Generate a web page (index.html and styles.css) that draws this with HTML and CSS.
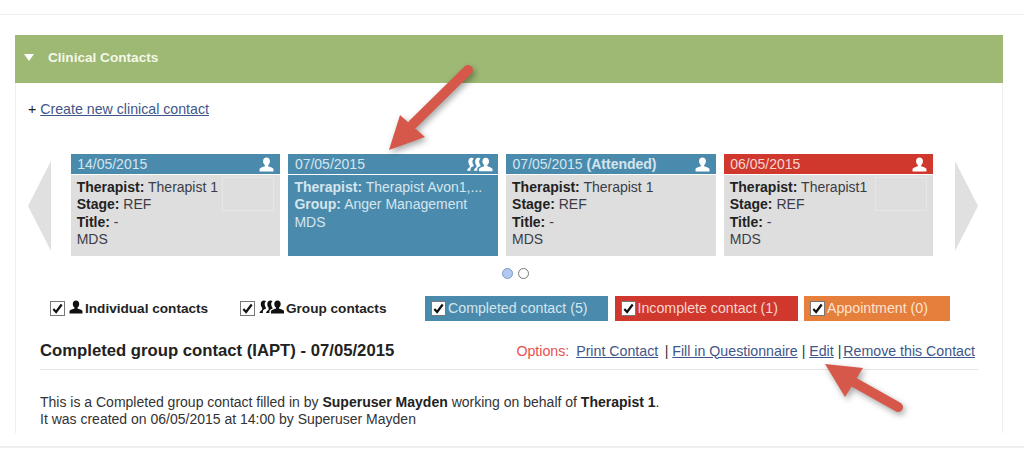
FILE: index.html
```html
<!DOCTYPE html>
<html lang="en">
<head>
    <meta charset="UTF-8">
    <meta name="viewport" content="width=device-width, initial-scale=1.0">
    <title>Clinical Contacts</title>
    <link rel="stylesheet" href="styles.css">
</head>
<body>
    <svg class="icon-defs" width="0" height="0">
        <symbol id="person" viewBox="0 0 14 14">
            <path d="M7 0.5c2 0 3.2 1.5 3.2 3.4 0 1.6-.8 3-1.700 3.700v1c1.800.5 4 1.200 5 2.400v2.500H.5v-2.500c1-1.200 3.200-1.900 5-2.400v-1C4.600 6.900 3.800 5.500 3.800 3.900 3.800 2 5 .5 7 .5z"/>
        </symbol>
        <symbol id="group" viewBox="0 0 25 14">
            <path d="M18 .5c2 0 3.200 1.500 3.200 3.400 0 1.600-.8 3-1.700 3.700v1c1.800.5 4 1.200 5 2.400v2.500h-13v-2.500c1-1.200 3.200-1.900 5-2.400v-1c-.9-.7-1.700-2.100-1.700-3.700C14.800 2 16 .5 18 .5z"/>
            <path d="M11 .5c.8 0 1.500.2 2 .7-.9.8-1.300 1.800-1.300 2.900 0 1.400.5 2.600 1.200 3.500v1.200c-1.300.4-2.400 1-3 2v2.200H6.500c.3-1.400 1.200-2.500 2.600-3.300V7.800c-.8-.8-1.300-2.200-1.300-3.800C7.800 2 9 .5 11 .5z"/>
            <path d="M4.500.5c.8 0 1.500.2 2 .7-.9.8-1.300 1.800-1.300 2.900 0 1.400.5 2.600 1.200 3.500v1.200c-1.300.4-2.400 1-3 2v2.200H0c.3-1.400 1.200-2.500 2.600-3.300V7.800c-.8-.8-1.300-2.200-1.300-3.800C1.300 2 2.500.5 4.500.5z"/>
        </symbol>
        <symbol id="tick" viewBox="0 0 14 14">
            <path d="M2.500 7.500l3 3.200 6-8" fill="none" stroke="#111" stroke-width="2.400"/>
        </symbol>
    </svg>

    <div class="page">
        <section class="panel">
            <div class="panel-head">
                <span class="caret-down"></span>
                <span>Clinical Contacts</span>
            </div>

            <div class="panel-body">
                <p class="create-row">+ <a href="#">Create new clinical contact</a></p>

                <div class="carousel">
                    <span class="nav nav-prev"></span>

                    <div class="card">
                        <div class="card-date blue">
                            <span>14/05/2015</span>
                            <svg class="card-icon"><use href="#person"/></svg>
                        </div>
                        <div class="card-text">
                            <span class="ghost"></span>
                            <b>Therapist:</b> Therapist 1<br>
                            <b>Stage:</b> REF<br>
                            <b>Title:</b> -<br>
                            MDS
                        </div>
                    </div>

                    <div class="card selected">
                        <div class="card-date blue">
                            <span>07/05/2015</span>
                            <svg class="card-icon wide"><use href="#group"/></svg>
                        </div>
                        <div class="card-text">
                            <b>Therapist:</b> Therapist Avon1,...<br>
                            <b>Group:</b> Anger Management<br>
                            MDS
                        </div>
                    </div>

                    <div class="card">
                        <div class="card-date blue">
                            <span>07/05/2015 <b>(Attended)</b></span>
                            <svg class="card-icon"><use href="#person"/></svg>
                        </div>
                        <div class="card-text">
                            <b>Therapist:</b> Therapist 1<br>
                            <b>Stage:</b> REF<br>
                            <b>Title:</b> -<br>
                            MDS
                        </div>
                    </div>

                    <div class="card">
                        <div class="card-date red">
                            <span>06/05/2015</span>
                            <svg class="card-icon"><use href="#person"/></svg>
                        </div>
                        <div class="card-text">
                            <span class="ghost"></span>
                            <b>Therapist:</b> Therapist1<br>
                            <b>Stage:</b> REF<br>
                            <b>Title:</b> -<br>
                            MDS
                        </div>
                    </div>

                    <span class="nav nav-next"></span>
                </div>

                <div class="dots">
                    <span class="dot active"></span>
                    <span class="dot"></span>
                </div>

                <div class="filters">
                    <label class="type-filter first">
                        <span class="check"><svg><use href="#tick"/></svg></span>
                        <svg class="type-icon"><use href="#person"/></svg>
                        Individual contacts
                    </label>
                    <label class="type-filter second">
                        <span class="check"><svg><use href="#tick"/></svg></span>
                        <svg class="type-icon wide"><use href="#group"/></svg>
                        Group contacts
                    </label>
                    <label class="state-filter blue completed">
                        <span class="check"><svg><use href="#tick"/></svg></span>
                        Completed contact (5)
                    </label>
                    <label class="state-filter red incomplete">
                        <span class="check"><svg><use href="#tick"/></svg></span>
                        Incomplete contact (1)
                    </label>
                    <label class="state-filter orange appointment">
                        <span class="check"><svg><use href="#tick"/></svg></span>
                        Appointment (0)
                    </label>
                </div>

                <div class="detail-head">
                    <h2>Completed group contact (IAPT) - 07/05/2015</h2>
                    <div class="options">
                        <span class="options-label">Options:</span>
                        <a href="#">Print Contact</a>
                        <span class="first-sep">|</span>
                        <a href="#">Fill in Questionnaire</a>
                        <span>|</span>
                        <a href="#">Edit</a>
                        <span class="last-sep">|</span>
                        <a href="#">Remove this Contact</a>
                    </div>
                </div>

                <p class="detail-text">
                    This is a Completed group contact filled in by <b>Superuser Mayden</b> working on behalf of <b>Therapist 1</b>.<br>
                    It was created on 06/05/2015 at 14:00 by Superuser Mayden
                </p>
            </div>
        </section>
    </div>

    <!-- annotation arrows on top of the screenshot -->
    <svg class="arrow arrow-top" width="100" height="100" viewBox="0 0 100 100">
        <path d="M83 10L28 64" stroke="#d6584b" stroke-width="10" stroke-linecap="round" fill="none"/>
        <path d="M4 90L15 55 40 77z" fill="#d6584b"/>
    </svg>
    <svg class="arrow arrow-bottom" width="100" height="60" viewBox="0 0 100 60">
        <path d="M78 45L30 18" stroke="#d6584b" stroke-width="10" stroke-linecap="round" fill="none"/>
        <path d="M5 2L43 6 25 35z" fill="#d6584b"/>
    </svg>
</body>
</html>
```
FILE: styles.css
```css
body {
    margin: 0;
    background-color: #fff;
    font-family: "Liberation Sans", Arial, sans-serif;
    font-size: 14.2px;
    color: #333;
}

a {
    color: #3f5688;
}

.icon-defs {
    display: block;
    height: 0;
}

.page {
    height: 411px;
    margin-top: 14px;
    padding: 20px 21px 0 15px;
    border-top: 1px solid #eee;
    border-bottom: 2px solid #eee;
    overflow: hidden;
}

/* Panel */
.panel {
    border-left: 1px solid #eee;
    border-right: 1px solid #eee;
    height: 398px;
}

.panel-head {
    display: flex;
    align-items: center;
    height: 45px;
    margin: 0 -1px;
    padding: 0 0 3px 9px;
    background-color: #9db974;
    color: #f4f8e8;
    font-size: 13.6px;
    font-weight: bold;
}

.caret-down {
    width: 0;
    height: 0;
    margin-right: 14px;
    margin-bottom: 1px;
    border-left: 5px solid transparent;
    border-right: 5px solid transparent;
    border-top: 7px solid #fff;
}

.panel-body {
    padding: 0 24px;
}

.create-row {
    margin: 0 0 0 -12px;
    padding-top: 18px;
    height: 35px;
    color: #222;
}

/* Carousel */
.carousel {
    display: flex;
    gap: 8px;
    position: relative;
    width: 950px;
    margin-top: 18px;
    margin-left: -12px;
    padding-left: 42.700px;
    box-sizing: border-box;
}

.nav {
    position: absolute;
    top: 7px;
    width: 0;
    height: 0;
    border-top: 45px solid transparent;
    border-bottom: 45px solid transparent;
}

.nav-prev {
    left: 0;
    border-right: 23px solid #e0e0e0;
}

.nav-next {
    right: 0;
    border-left: 23px solid #e0e0e0;
}

.card {
    flex: none;
    width: 209.700px;
    height: 102px;
    background-color: #dedede;
    font-size: 14px;
}

.card-date {
    display: flex;
    justify-content: space-between;
    align-items: center;
    height: 20px;
    padding: 0 6px 0 6.500px;
    border-bottom: 1px solid #fff;
    color: #d5e5ee;
}

.card-date.red {
    color: #f6d5d0;
}

.card-icon {
    width: 15px;
    height: 15px;
    fill: #fff;
}

.card-icon.wide {
    width: 26px;
    margin-right: -1px;
}

.card-text {
    position: relative;
    padding: 4px 6px;
    line-height: 17.400px;
    color: #3c3c46;
}

.card-text b {
    color: #222;
}

.ghost {
    position: absolute;
    top: 2px;
    right: 6px;
    width: 50px;
    height: 32px;
    border: 1px solid #e6e6e6;
}

.card.selected {
    background-color: #4a8bad;
}

.card.selected .card-text,
.card.selected .card-text b {
    color: #d5e5ee;
}

.blue {
    background-color: #4a8bad;
}

.red {
    background-color: #d0372d;
}

.orange {
    background-color: #e67e3c;
}

/* Pager dots */
.dots {
    display: flex;
    justify-content: center;
    gap: 5px;
    margin-top: 12px;
    margin-left: 13px;
}

.dot {
    width: 9px;
    height: 9px;
    border: 1px solid #777;
    border-radius: 50%;
    background-color: #fff;
}

.dot.active {
    background-color: #b3c8ee;
    border-color: #7d9cc8;
}

/* Filters */
.filters {
    display: flex;
    align-items: center;
    height: 25px;
    margin-top: 17px;
}

.filters label {
    display: flex;
    align-items: center;
}

.check {
    flex: none;
    width: 13px;
    height: 13px;
    margin-right: 3px;
    background-color: #fff;
    border: 1px solid #777;
}

.check svg {
    display: block;
    width: 13px;
    height: 13px;
}

.type-filter {
    color: #222;
    font-size: 13.6px;
    font-weight: bold;
}

.type-icon {
    width: 14px;
    height: 14px;
    margin: -4px 2px 0 1px;
    fill: #111;
}

.type-icon.wide {
    width: 26px;
    margin-right: 1px;
}

.first {
    width: 190px;
    margin-left: 10px;
}

.second {
    width: 185px;
}

.state-filter {
    height: 25px;
    padding-left: 6px;
    padding-bottom: 1px;
    box-sizing: border-box;
    color: #d5e5ee;
}

.state-filter .check {
    margin-right: 2px;
}

.state-filter.red {
    color: #f6d5d0;
}

.state-filter.orange {
    color: #fbe3d2;
}

.completed,
.incomplete {
    width: 183px;
}

.incomplete {
    margin-left: 6.500px;
}

.appointment {
    width: 146px;
    margin-left: 6.500px;
}

/* Detail section */
.detail-head {
    display: flex;
    justify-content: space-between;
    align-items: center;
    height: 37px;
    margin-top: 11px;
    border-bottom: 1px solid #e4e4e4;
}

.detail-head h2 {
    margin: 0;
    font-size: 16.700px;
    color: #222;
}

.options {
    margin-right: 3px;
}

.options-label {
    margin-right: 3px;
    color: #e8504e;
}

.first-sep {
    margin-left: 2.500px;
}

.last-sep {
    margin-right: -2px;
}

.detail-text {
    margin: 0;
    padding-top: 24px;
    font-size: 14px;
    line-height: 17.400px;
}

.detail-text b {
    color: #222;
}

/* Annotation arrows */
.arrow {
    position: absolute;
    filter: drop-shadow(2px 3px 3px rgba(0, 0, 0, 0.35));
}

.arrow-top {
    left: 385px;
    top: 60px;
}

.arrow-bottom {
    left: 820px;
    top: 362px;
}
```
